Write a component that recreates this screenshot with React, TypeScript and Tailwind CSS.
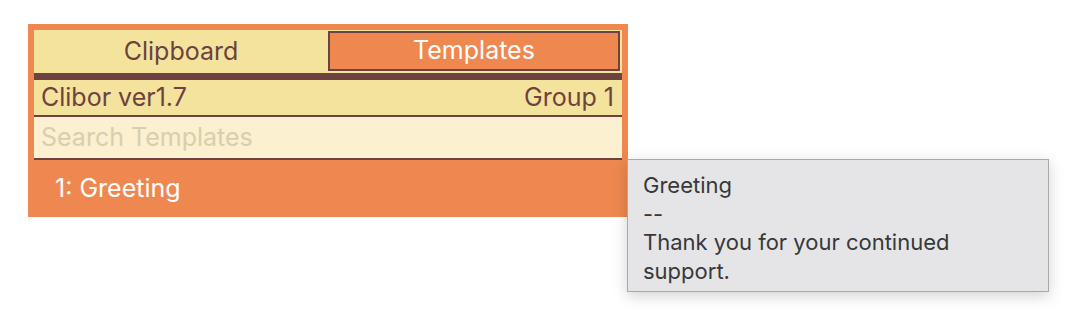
import React from 'react';

const font = { fontFamily: 'Inter, "Liberation Sans", sans-serif' };

export default function App() {
  return (
    <div className="relative w-[1076px] h-[326px] bg-white" style={font}>
      <div className="ml-[28px] pt-[24px]">
        <div className="w-[600px] bg-[#ee8850]">
          {/* Tabs */}
          <div className="px-[6px] pt-[6px]">
            <div className="grid grid-cols-2 h-[43px] bg-[#f4e39d]">
              <div className="flex items-center justify-center text-[25px] text-[#6d4240]">
                Clipboard
              </div>
              <div className="pt-[1px] pr-[2px]">
                <div className="h-[40px] flex items-center justify-center border-2 border-[#6d4240] bg-[#ee8850] text-[25px] text-white">
                  Templates
                </div>
              </div>
            </div>
            <div className="h-[7px] bg-[#6d4240]" />
            {/* Info row */}
            <div className="h-[35px] flex items-center justify-between pl-[7px] pr-[8px] bg-[#f4e39d] text-[25px] text-[#6d4240]">
              <span>Clibor ver1.7</span>
              <span>Group 1</span>
            </div>
            <div className="h-[2px] bg-[#6d4240]" />
            {/* Search */}
            <div className="h-[41px] flex items-center px-[7px] bg-[#fbf0cf] text-[25px] text-[#d8cfae]">
              Search Templates
            </div>
            <div className="h-[2px] bg-[#6d4240]" />
          </div>
          {/* List */}
          <div className="h-[57px] flex items-center pl-[27px] text-[25px] text-white">
            1: Greeting
          </div>
        </div>
      </div>

      {/* Tooltip */}
      <div className="absolute left-[627px] top-[159px] w-[422px] h-[133px] bg-[#e5e5e7] border border-[#a9a9a9] shadow-[0_4px_14px_rgba(0,0,0,0.18)] pl-[15px] pr-[16px] pt-[11px] text-[22px] leading-[28.5px] text-[#383838]">
        <div>Greeting</div>
        <div>--</div>
        <div className="w-[340px]">Thank you for your continued support.</div>
      </div>
    </div>
  );
}
